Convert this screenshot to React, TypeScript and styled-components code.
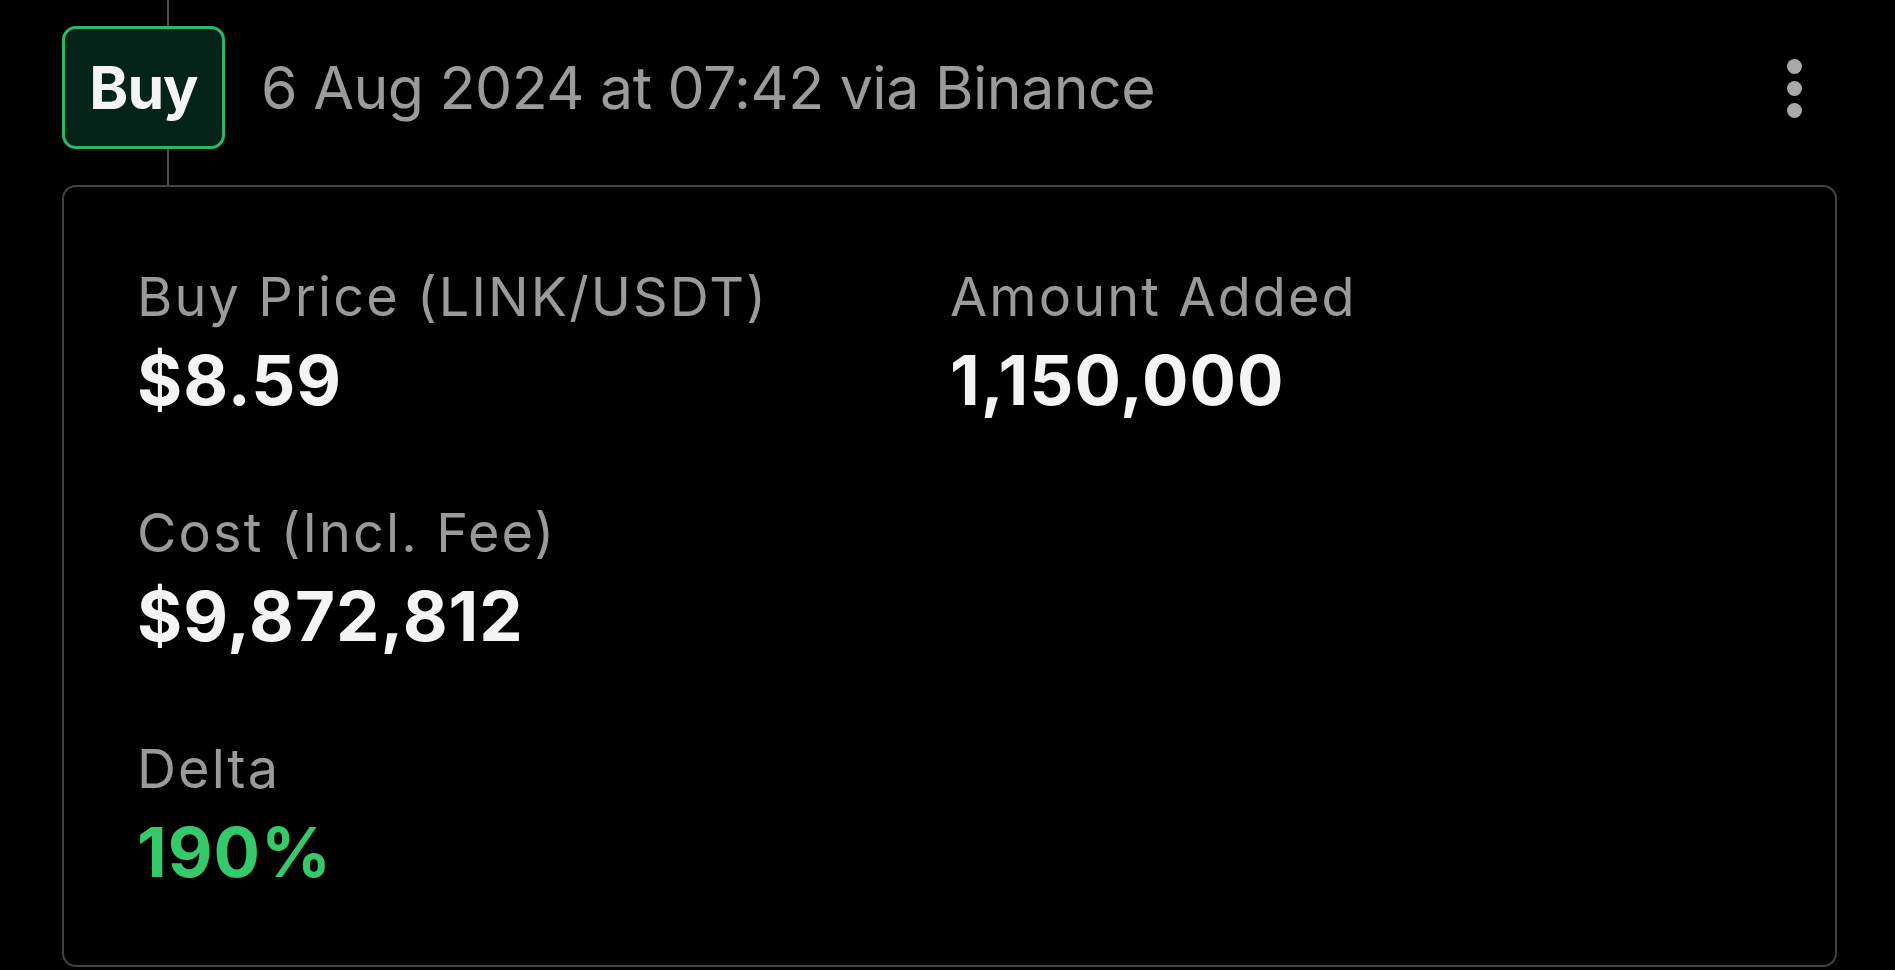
import React from "react";
import styled, { createGlobalStyle } from "styled-components";

const GlobalStyle = createGlobalStyle`
  html, body {
    margin: 0;
    padding: 0;
    background: #000;
  }
  body {
    font-family: Inter, "Noto Sans", "Liberation Sans", sans-serif;
    -webkit-font-smoothing: antialiased;
  }
`;

const Page = styled.div`
  width: 1895px;
  height: 970px;
  box-sizing: border-box;
  padding: 0 58px 0 62px;
  background: #000;
  overflow: hidden;
  display: flex;
  flex-direction: column;
`;

const Header = styled.header`
  position: relative;
  display: flex;
  align-items: center;
  height: 185px;
  padding: 26px 0 36px;
  box-sizing: border-box;
  flex-shrink: 0;

  &::before {
    content: "";
    position: absolute;
    left: 105px;
    top: 0;
    bottom: 0;
    width: 2px;
    background: #4a4a4a;
  }
`;

const Badge = styled.div`
  position: relative;
  z-index: 1;
  width: 163px;
  height: 123px;
  box-sizing: border-box;
  border: 3px solid #2fb56b;
  border-radius: 14px;
  background: #04241a;
  display: flex;
  align-items: center;
  justify-content: center;
  color: #f4f4f4;
  font-weight: 700;
  font-size: 59px;
  line-height: 70px;
  letter-spacing: -1px;
`;

const DateText = styled.div`
  margin-left: 36px;
  color: #9b9b9b;
  font-size: 59px;
  line-height: 70px;
  font-weight: 400;
  letter-spacing: -0.5px;
  white-space: nowrap;
`;

const Kebab = styled.button`
  margin-left: auto;
  margin-right: 35px;
  margin-top: 2px;
  padding: 0;
  border: none;
  background: transparent;
  display: flex;
  flex-direction: column;
  align-items: center;
  gap: 7px;
`;

const Dot = styled.span`
  width: 15px;
  height: 15px;
  border-radius: 50%;
  background: #a9a9a9;
`;

const Card = styled.section`
  height: 782px;
  box-sizing: border-box;
  border: 2px solid #424242;
  border-radius: 14px;
  background: #000;
  padding: 78px 0 0 73px;
  flex-shrink: 0;
`;

const Grid = styled.div`
  display: grid;
  grid-template-columns: 813px 1fr;
  row-gap: 81px;
`;

const Field = styled.div`
  display: flex;
  flex-direction: column;
`;

const Label = styled.div`
  color: #9a9a9a;
  font-size: 54px;
  line-height: 64px;
  font-weight: 400;
  letter-spacing: 2.1px;
  margin-bottom: 11px;
  white-space: nowrap;
`;

const Value = styled.div<{ $accent?: boolean }>`
  color: ${(p) => (p.$accent ? "#36c96a" : "#f4f4f4")};
  font-size: 69px;
  line-height: 80px;
  font-weight: 700;
  letter-spacing: 1px;
  white-space: nowrap;
`;

type Item = { label: string; value: string; accent?: boolean } | null;

const items: Item[] = [
  { label: "Buy Price (LINK/USDT)", value: "$8.59" },
  { label: "Amount Added", value: "1,150,000" },
  { label: "Cost (Incl. Fee)", value: "$9,872,812" },
  null,
  { label: "Delta", value: "190%", accent: true },
  null,
];

export default function App() {
  return (
    <>
      <GlobalStyle />
      <Page>
        <Header>
          <Badge>Buy</Badge>
          <DateText>6 Aug 2024 at 07:42 via Binance</DateText>
          <Kebab aria-label="More">
            <Dot />
            <Dot />
            <Dot />
          </Kebab>
        </Header>
        <Card>
          <Grid>
            {items.map((it, i) =>
              it ? (
                <Field key={i}>
                  <Label>{it.label}</Label>
                  <Value $accent={it.accent}>{it.value}</Value>
                </Field>
              ) : (
                <div key={i} />
              )
            )}
          </Grid>
        </Card>
      </Page>
    </>
  );
}
